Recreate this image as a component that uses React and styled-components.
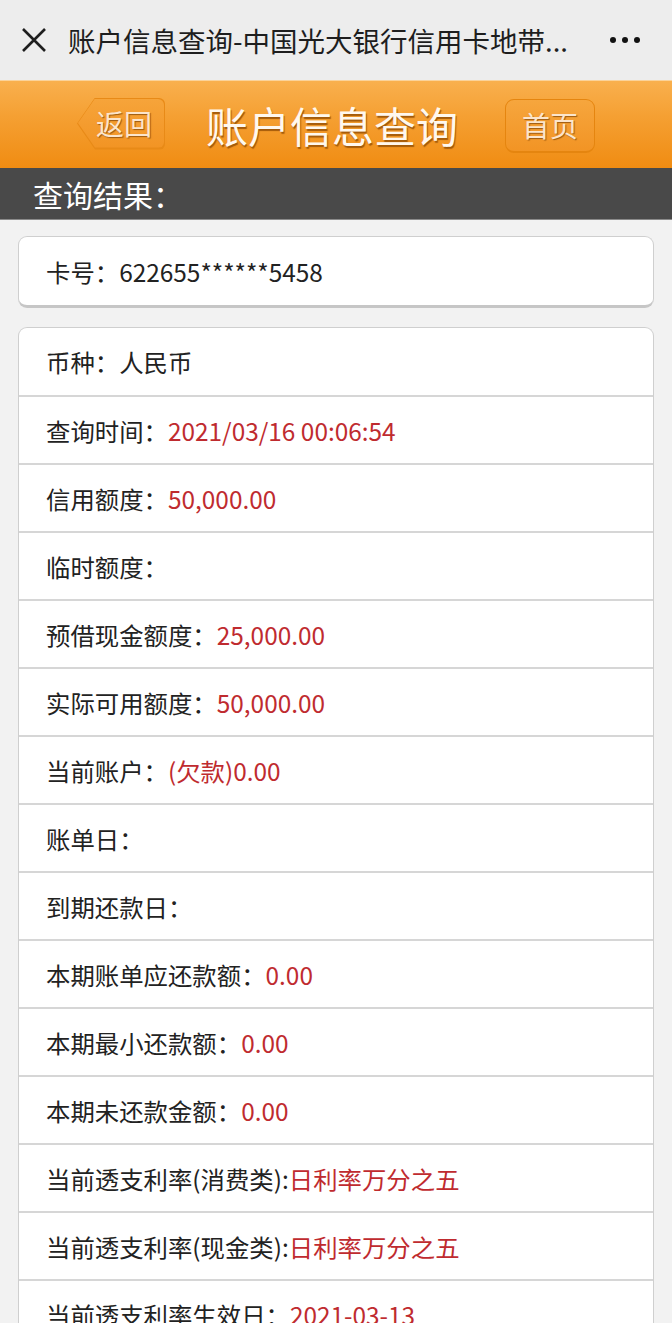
import React from "react";
import styled, { createGlobalStyle } from "styled-components";

const Global = createGlobalStyle`
  html, body {
    margin: 0;
    padding: 0;
    background: #f2f2f2;
    font-family: "Noto Sans CJK SC", "Noto Sans", sans-serif;
  }
`

const Page = styled.div`
  width: 672px;
  min-height: 1323px;
  background: #f2f2f2;
  overflow: hidden;
`

const TopBar = styled.div`
  height: 80px;
  background: #ededed;
  display: flex;
  align-items: center;
  padding: 0 20px;
  box-sizing: border-box;
`

const Close = styled.span`
  display: flex;
  width: 28px;
  height: 28px;
  margin-right: 20px;
`

const TopTitle = styled.div`
  flex: 1;
  font-size: 27.5px;
  color: #1e1e1e;
  white-space: nowrap;
  overflow: hidden;
`

const Dots = styled.div`
  display: flex;
  gap: 6px;
  margin-right: 12px;

  span {
    width: 6px;
    height: 6px;
    border-radius: 50%;
    background: #111;
  }
`

const Header = styled.div`
  height: 88px;
  background: linear-gradient(#f9b04e 0%, #f5a033 40%, #f08c12 100%);
  border-top: 1px solid #fbd39a;
  box-sizing: border-box;
  display: grid;
  grid-template-columns: 77px 88px 1fr 90px 77px;
  align-items: center;
`

const HeaderTitle = styled.div`
  grid-column: 3;
  text-align: center;
  font-size: 42px;
  color: #fff8ee;
  text-shadow: 1px 2px 1px #a35a0a;
  padding-right: 6px;
`

const BackOuter = styled.div`
  grid-column: 2;
  height: 52px;
  background: #e88a17;
  clip-path: polygon(18px 0, 100% 0, 100% 100%, 18px 100%, 0 50%);
  border-radius: 0 6px 6px 0;
  display: flex;
  margin-top: -2px;
`

const BackInner = styled.div`
  flex: 1;
  margin: 1px 1px 2px 1px;
  background: linear-gradient(#f6a43a, #f29424);
  clip-path: polygon(17px 0, 100% 0, 100% 100%, 17px 100%, 0 50%);
  border-radius: 0 6px 6px 0;
  display: flex;
  align-items: center;
  justify-content: flex-end;
  padding-right: 12px;
  font-size: 28px;
  color: #fbe5cc;
  text-shadow: 1px 1px 1px #9c5a12;
`

const HomeButton = styled.div`
  grid-column: 4;
  height: 54px;
  box-sizing: border-box;
  border: 1px solid #e5850f;
  border-bottom-width: 2px;
  border-radius: 9px;
  background: linear-gradient(#f6a63e, #f29424);
  display: flex;
  align-items: center;
  justify-content: center;
  font-size: 28px;
  color: #fbe5cc;
  text-shadow: 1px 1px 1px #9c5a12;
  margin-top: 2px;
`

const SectionBar = styled.div`
  height: 52px;
  background: #494949;
  display: flex;
  align-items: center;
  padding-left: 33px;
  font-size: 30px;
  color: #fff;
  border-bottom: 1px solid #8a8a8a;
  box-sizing: border-box;
`

const Body = styled.div`
  display: flex;
  flex-direction: column;
  gap: 19px;
  padding: 16px 18px 0 18px;
`

const Card = styled.div`
  background: #fff;
  border: 1px solid #cfcfcf;
  border-bottom: 3px solid #c6c6c6;
  border-radius: 9px;
  overflow: hidden;
`

const Row = styled.div`
  height: ${p => p.h || 67}px;
  display: flex;
  align-items: center;
  padding-left: 27px;
  font-size: 24.4px;
  color: #222;
  white-space: nowrap;

  & + & {
    border-top: 2px solid #d6d6d6;
    height: 66px;
  }
`

const Value = styled.span`
  color: #bf2b2f;
`

const rows = [
  ["币种：", "", "人民币"],
  ["查询时间：", "2021/03/16 00:06:54"],
  ["信用额度：", "50,000.00"],
  ["临时额度：", ""],
  ["预借现金额度：", "25,000.00"],
  ["实际可用额度：", "50,000.00"],
  ["当前账户：", "(欠款)0.00"],
  ["账单日：", ""],
  ["到期还款日：", ""],
  ["本期账单应还款额：", "0.00"],
  ["本期最小还款额：", "0.00"],
  ["本期未还款金额：", "0.00"],
  ["当前透支利率(消费类):", "日利率万分之五"],
  ["当前透支利率(现金类):", "日利率万分之五"],
  ["当前透支利率生效日：", "2021-03-13"],
]

export default function App() {
  return (
    <Page>
      <Global />
      <TopBar>
        <Close>
          <svg width="28" height="28" viewBox="0 0 28 28">
            <path d="M3 3 L25 25 M25 3 L3 25" stroke="#1e1e1e" strokeWidth="2.6" fill="none" />
          </svg>
        </Close>
        <TopTitle>账户信息查询-中国光大银行信用卡地带...</TopTitle>
        <Dots><span /><span /><span /></Dots>
      </TopBar>
      <Header>
        <BackOuter><BackInner>返回</BackInner></BackOuter>
        <HeaderTitle>账户信息查询</HeaderTitle>
        <HomeButton>首页</HomeButton>
      </Header>
      <SectionBar>查询结果：</SectionBar>
      <Body>
        <Card>
          <Row h={68}>卡号：622655******5458</Row>
        </Card>
        <Card>
          {rows.map(([label, value, plain]) => (
            <Row key={label}>
              {label}
              {plain}
              <Value>{value}</Value>
            </Row>
          ))}
        </Card>
      </Body>
    </Page>
  )
}
